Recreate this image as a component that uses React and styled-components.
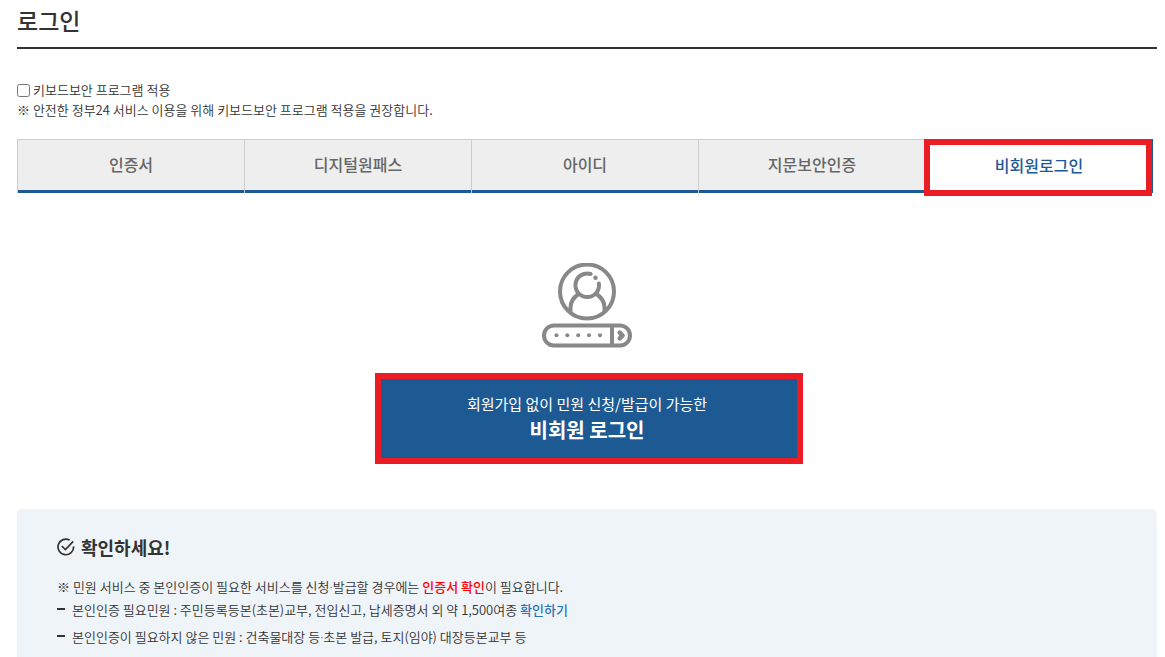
import React from 'react'
import styled, { createGlobalStyle, css, ThemeProvider } from 'styled-components'

const { useState } = React

const theme = {
	color: {
		text: '#333333',
		muted: '#666666',
		primary: '#1d5a94',
		link: '#2b74bd',
		alert: '#ff0000',
		mark: '#ec1c24',
		line: '#cccccc',
		tab: '#eeeeee',
		panel: '#eff4f9',
		icon: '#888888',
	},
	font: "'Noto Sans CJK KR', 'Noto Sans', sans-serif",
}

const GlobalStyle = createGlobalStyle`
	* {
		box-sizing: border-box;
	}

	body {
		margin: 0;
		background: #fff;
		color: ${theme.color.text};
		font-family: ${theme.font};
		font-size: 13px;
		font-weight: 350;
		line-height: 20px;
	}
`

const Page = styled.main`
	display: flex;
	flex-direction: column;
	min-height: 100vh;
	padding: 0 8px 0 17px;
`

const Title = styled.h1`
	margin: 0;
	padding: 3px 0 10px;
	border-bottom: 2px solid ${({ theme }) => theme.color.text};
	font-size: 23px;
	font-weight: 500;
	line-height: 34px;
`

const Security = styled.section`
	padding: 31px 0 19px;
`

const CheckLabel = styled.label`
	display: flex;
	align-items: center;
	gap: 3px;
`

const Checkbox = styled.input`
	width: 13px;
	height: 13px;
	margin: 0;
`

const Text = styled.p`
	margin: 0;
`

const TabList = styled.div`
	display: flex;
	margin-right: 4px;
	border-left: 1px solid ${({ theme }) => theme.color.line};
`

const Tab = styled.button`
	${({ theme, $active }) => css`
		position: relative;
		flex: 1;
		height: 54px;
		padding: 0 0 5px;
		border: solid ${theme.color.line};
		border-width: 1px 1px 0 0;
		background: ${$active ? '#fff' : theme.color.tab};
		box-shadow: ${$active ? 'none' : `inset 0 -3px ${theme.color.primary}`};
		color: ${$active ? theme.color.primary : theme.color.muted};
		font-family: inherit;
		font-size: 16px;
		font-weight: 500;
		line-height: 24px;
		cursor: pointer;

		${$active &&
		css`
			padding-bottom: 3px;
			border-color: ${theme.color.primary};
		`}
	`}
`

/* Red frame that lies over the control it points at */
const Mark = styled.span`
	position: absolute;
	inset: ${({ $inset }) => $inset};
	border: 6px solid ${({ theme }) => theme.color.mark};
	pointer-events: none;
`

const Guest = styled.section`
	display: flex;
	flex-direction: column;
	align-items: center;
	gap: 27px;
	padding: 70px 0 49px;
`

const GuestButton = styled.button`
	position: relative;
	width: 420px;
	max-width: 100%;
	padding: 16px 0 17px;
	border: 0;
	background: ${({ theme }) => theme.color.primary};
	color: #fff;
	font-family: inherit;
	font-size: 15px;
	line-height: 26px;
	cursor: pointer;
`

const GuestName = styled.strong`
	display: block;
	font-size: 20px;
	font-weight: 700;
`

const Notice = styled.section`
	flex: 1;
	padding: 24px 40px 8px;
	border-radius: 5px 5px 0 0;
	background: ${({ theme }) => theme.color.panel};
`

const NoticeTitle = styled.h2`
	display: flex;
	align-items: center;
	gap: 6px;
	margin: 0 0 16px;
	font-size: 18px;
	font-weight: 700;
	line-height: 28px;
`

const NoticeList = styled.ul`
	display: grid;
	gap: 7px;
	margin: 3px 0 0;
	padding: 0;
	list-style: none;
`

const NoticeItem = styled.li`
	display: flex;
	gap: 7px;

	&::before {
		content: '';
		width: 8px;
		height: 2px;
		margin-top: 8px;
		background: ${({ theme }) => theme.color.text};
	}
`

const Alert = styled.strong`
	color: ${({ theme }) => theme.color.alert};
	font-weight: 500;
`

const Link = styled.a`
	color: ${({ theme }) => theme.color.link};
	font-weight: 500;
	text-decoration: none;
`

/* The Korean face sets a wide middle dot */
const Dot = styled.span`
	font-family: 'Noto Sans', sans-serif;
	line-height: 1;
`

const GuestIcon = () => (
	<svg width="90" height="85" viewBox="0 0 90 85" fill="none" stroke={theme.color.icon} strokeWidth="4" aria-hidden="true">
		<circle cx="45" cy="28.5" r="27" />
		<path d="M48.7 11A11.8 11.8 0 1 0 56.9 20.5" strokeLinecap="round" />
		<path d="M36.5 31c-5 3.5-8 8-8 13.5V50M54.5 31c5 3.5 8 8 8 13.5V50" />
		<circle cx="53.5" cy="14.8" r="2.2" fill={theme.color.icon} stroke="none" />
		<rect x="2" y="62.5" width="86" height="20" rx="10" />
		<path d="M70 62.5v20" />
		<path d="M77.7 69.7l2.8 2.8-2.8 2.8" strokeWidth="4.5" strokeLinecap="round" strokeLinejoin="round" />
		<g fill={theme.color.icon} stroke="none">
			{[14.5, 25.3, 36.2, 47, 58].map((x) => (
				<circle key={x} cx={x} cy="72.3" r="2" />
			))}
		</g>
	</svg>
)

const CheckIcon = () => (
	<svg width="18" height="18" viewBox="0 0 18 18" fill="none" stroke={theme.color.text} strokeWidth="1.7" aria-hidden="true">
		<path d="M12.6 2.1A7.8 7.8 0 1 0 16.6 8.4" />
		<path d="M4.8 8l3.6 3.6L16.2 3.3" />
	</svg>
)

/**
 * Login
 */

const TABS = ['인증서', '디지털원패스', '아이디', '지문보안인증', '비회원로그인']

const GUEST_TAB = '비회원로그인'

const App = () => {
	const [active, setActive] = useState(GUEST_TAB)

	return (
		<ThemeProvider theme={theme}>
			<GlobalStyle />
			<Page>
				<Title>로그인</Title>
				<Security>
					<CheckLabel htmlFor="keyboard-security">
						<Checkbox id="keyboard-security" type="checkbox" />
						키보드보안 프로그램 적용
					</CheckLabel>
					<Text>※ 안전한 정부24 서비스 이용을 위해 키보드보안 프로그램 적용을 권장합니다.</Text>
				</Security>
				<TabList role="tablist">
					{TABS.map((tab) => (
						<Tab
							key={tab}
							type="button"
							role="tab"
							aria-selected={tab === active}
							$active={tab === active}
							onClick={() => setActive(tab)}
						>
							{tab}
							{tab === GUEST_TAB && <Mark $inset="-1px 0 -3px -2px" />}
						</Tab>
					))}
				</TabList>
				<Guest>
					<GuestIcon />
					<GuestButton type="button">
						회원가입 없이 민원 신청/발급이 가능한
						<GuestName>비회원 로그인</GuestName>
						<Mark $inset="-2px -6px -4px -2px" />
					</GuestButton>
				</Guest>
				<Notice>
					<NoticeTitle>
						<CheckIcon />
						확인하세요!
					</NoticeTitle>
					<Text>
						※ 민원 서비스 중 본인인증이 필요한 서비스를 신청<Dot>·</Dot>발급할 경우에는 <Alert>인증서 확인</Alert>이 필요합니다.
					</Text>
					<NoticeList>
						<NoticeItem>
							<span>
								본인인증 필요민원 : 주민등록등본(초본)교부, 전입신고, 납세증명서 외 약 1,500여종 <Link href="#list">확인하기</Link>
							</span>
						</NoticeItem>
						<NoticeItem>
							<span>
								본인인증이 필요하지 않은 민원 : 건축물대장 등<Dot>·</Dot>초본 발급, 토지(임야) 대장등본교부 등
							</span>
						</NoticeItem>
					</NoticeList>
				</Notice>
			</Page>
		</ThemeProvider>
	)
}

export default App
